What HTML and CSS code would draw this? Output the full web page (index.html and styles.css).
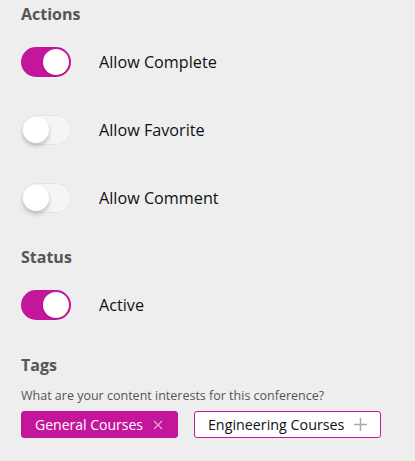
FILE: index.html
```html
<!DOCTYPE html>
<html>
<head>
<meta charset="utf-8">
<link rel="stylesheet" href="styles.css">
</head>
<body>
<div class="page">
  <h2 class="heading">Actions</h2>
  <div class="rows">
    <div class="row"><span class="toggle on"><span class="knob"></span></span><span class="label">Allow Complete</span></div>
    <div class="row"><span class="toggle"><span class="knob"></span></span><span class="label">Allow Favorite</span></div>
    <div class="row"><span class="toggle"><span class="knob"></span></span><span class="label">Allow Comment</span></div>
  </div>
  <h2 class="heading status">Status</h2>
  <div class="rows">
    <div class="row"><span class="toggle on"><span class="knob"></span></span><span class="label">Active</span></div>
  </div>
  <h2 class="heading tags">Tags</h2>
  <p class="hint">What are your content interests for this conference?</p>
  <div class="chips">
    <span class="chip selected">General Courses <svg class="ico" width="10" height="10" viewBox="0 0 10 10"><path d="M1 1L9 9M9 1L1 9" stroke="#e6a3d3" stroke-width="1.2"/></svg></span>
    <span class="chip">Engineering Courses <svg class="ico" width="13" height="13" viewBox="0 0 13 13"><path d="M6.5 0V13M0 6.5H13" stroke="#aaa" stroke-width="1.5"/></svg></span>
  </div>
</div>
</body>
</html>
```
FILE: styles.css
```css
html, body { margin: 0; padding: 0; background: #eeeeee; }
body { font-family: "Open Sans", "Liberation Sans", sans-serif; color: #111; }
.page { padding: 4px 21px 0 21px; }
.heading { margin: 0; font-size: 16px; font-weight: 700; color: #555; line-height: 20px; }
.rows { display: flex; flex-direction: column; gap: 38px; margin-top: 23px; }
.row { display: flex; align-items: center; height: 30px; }
.toggle { position: relative; width: 50px; height: 30px; border-radius: 15px; background: #f5f5f5; box-shadow: inset 0 0 0 1px #e4e4e4; flex: none; }
.toggle.on { background: #c4169b; box-shadow: none; }
.knob { position: absolute; top: 2px; left: 2px; width: 26px; height: 26px; border-radius: 50%; background: #fff; box-shadow: 0 3px 4px rgba(0,0,0,0.22); }
.toggle.on .knob { left: auto; right: 2px; box-shadow: 0 1px 2px rgba(0,0,0,0.2); }
.label { margin-left: 28px; font-size: 16.2px; color: #111; }
.status { margin-top: 34px; }
.tags { margin-top: 35px; }
.hint { margin: 13px 0 0; font-size: 12.5px; color: #555; line-height: 16px; }
.chips { display: flex; gap: 16px; margin-top: 7px; }
.chip { display: inline-flex; align-items: center; gap: 10px; height: 27px; box-sizing: border-box; padding: 0 14px 0 13px; border: 1px solid #c4169b; border-radius: 3px; background: #fff; font-size: 14px; color: #111; }
.chip:last-child { font-size: 14.3px; padding-right: 13px; }
.chip.selected { background: #c4169b; color: #fff; }
.ico { display: block; }
```
